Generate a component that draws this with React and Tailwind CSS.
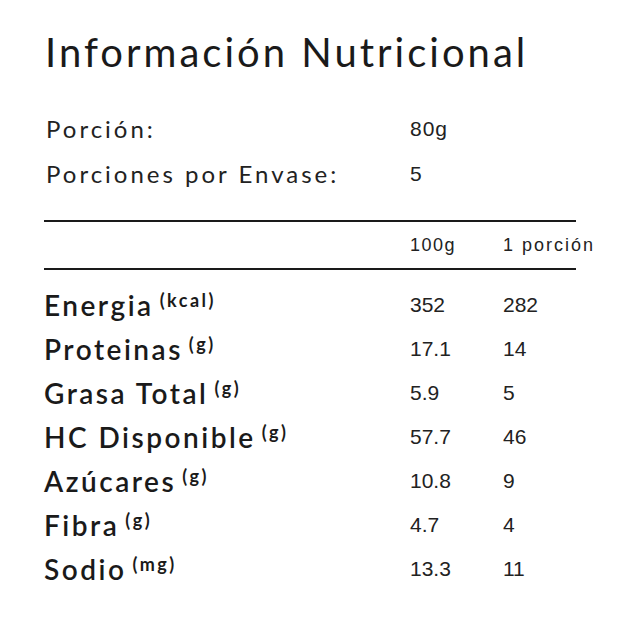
export default function App() {
  const rows = [
    ["Energia", "(kcal)", "352", "282"],
    ["Proteinas", "(g)", "17.1", "14"],
    ["Grasa Total", "(g)", "5.9", "5"],
    ["HC Disponible", "(g)", "57.7", "46"],
    ["Azúcares", "(g)", "10.8", "9"],
    ["Fibra", "(g)", "4.7", "4"],
    ["Sodio", "(mg)", "13.3", "11"],
  ];
  return (
    <div className="w-[635px] h-[635px] bg-white text-[#1a1a1a] pl-[44px] pt-[28px]">
      <h1 className="font-['Lato',sans-serif] text-[40px] leading-[48px] tracking-[3px] pl-[1px]">
        Información Nutricional
      </h1>
      <div className="mt-[30px] font-['Lato',sans-serif] text-[24px] tracking-[3px] text-[#222]">
        <div className="grid grid-cols-[366px_1fr] h-[45px] items-center">
          <span className="pl-[2px]">Porción:</span>
          <span className="font-['Liberation_Sans',sans-serif] text-[21px] tracking-[1px]">80g</span>
        </div>
        <div className="grid grid-cols-[366px_1fr] h-[45px] items-center">
          <span className="pl-[2px]">Porciones por Envase:</span>
          <span className="font-['Liberation_Sans',sans-serif] text-[21px] tracking-[1px]">5</span>
        </div>
      </div>
      <div className="w-[532px] h-[2px] bg-[#1a1a1a] mt-[24px]" />
      <div className="grid grid-cols-[366px_93px_1fr] h-[46px] items-center font-['Liberation_Sans',sans-serif] text-[18px] text-[#222]">
        <span />
        <span className="tracking-[1.5px]">100g</span>
        <span className="tracking-[2px]">1 porción</span>
      </div>
      <div className="w-[532px] h-[2px] bg-[#1a1a1a]" />
      <div className="mt-[13px]">
        {rows.map(([label, unit, a, b]) => (
          <div key={label} className="grid grid-cols-[366px_93px_1fr] h-[44px] items-center">
            <span className="font-['Lato',sans-serif] text-[28px] font-semibold tracking-[2.5px] text-[#1a1a1a] whitespace-nowrap">
              {label}
              <sup className="text-[18px] font-bold tracking-[2.5px] ml-[6px] top-[-0.5em]">{unit}</sup>
            </span>
            <span className="font-['Liberation_Sans',sans-serif] text-[21px] text-[#222]">{a}</span>
            <span className="font-['Liberation_Sans',sans-serif] text-[21px] text-[#222]">{b}</span>
          </div>
        ))}
      </div>
    </div>
  );
}
